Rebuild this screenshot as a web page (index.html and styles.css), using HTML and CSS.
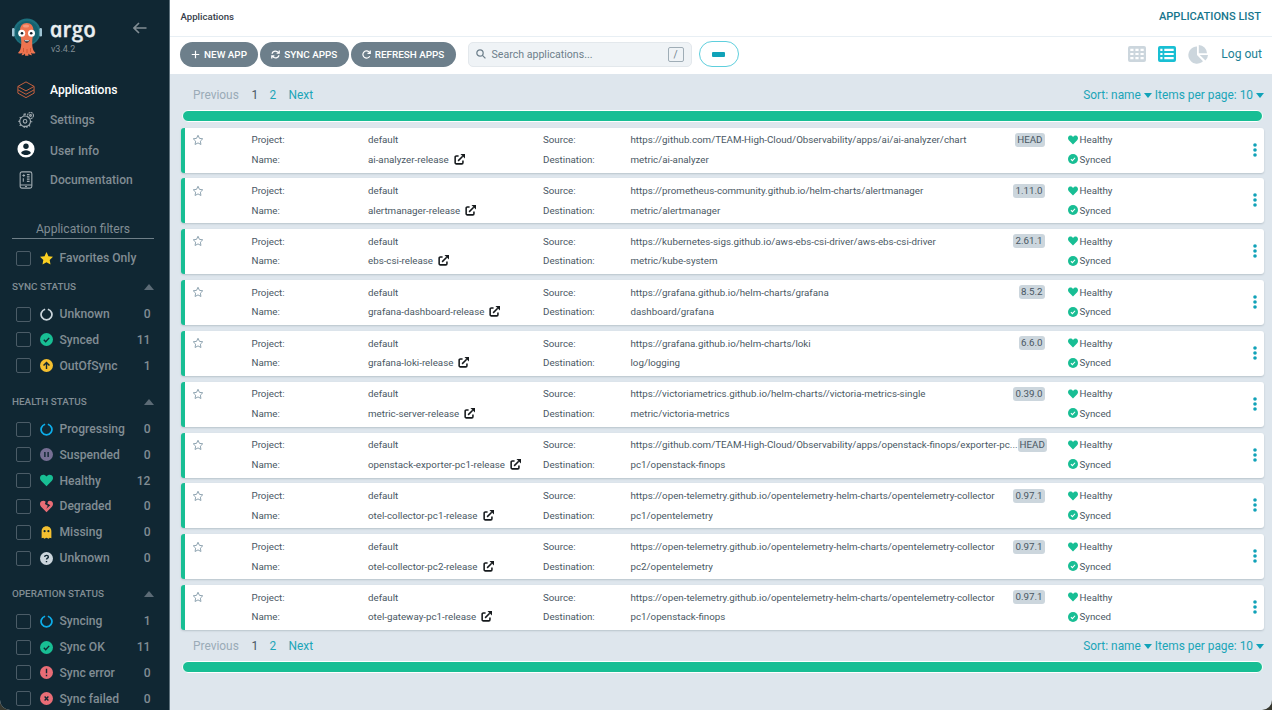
FILE: index.html
```html
<!DOCTYPE html>
<html lang="en">
<head>
    <meta charset="UTF-8">
    <meta name="viewport" content="width=device-width, initial-scale=1.0">
    <title>Applications List - Argo CD</title>
    <link rel="stylesheet" href="styles.css">
</head>
<body>
    <!-- Shared icons -->
    <svg class="sprite" width="0" height="0">
        <symbol id="i-star" viewBox="1 1 22 22"><path d="M12 1l3.300 7 7.700 1-5.600 5.400 1.400 7.600L12 18.300 5.200 22l1.400-7.600L1 9l7.700-1z"/></symbol>
        <symbol id="i-ring" viewBox="0 0 24 24"><path d="M14.500 2.300a10 10 0 1 1-5 0" fill="none" stroke="currentColor" stroke-width="3.200"/></symbol>
        <symbol id="i-check" viewBox="0 0 24 24"><circle cx="12" cy="12" r="12"/><path class="cut" d="M7 12.500l3.500 3.500 6.500-7"/></symbol>
        <symbol id="i-up" viewBox="0 0 24 24"><circle cx="12" cy="12" r="12"/><path class="cut" d="M12 18.500V7M6.500 12L12 6.500 17.500 12"/></symbol>
        <symbol id="i-pause" viewBox="0 0 24 24"><circle cx="12" cy="12" r="12"/><path class="cut" d="M9 7.500v9M15 7.500v9"/></symbol>
        <symbol id="i-heart" viewBox="0 0 24 24"><path d="M12 22.500L2 12.500C-1 9-.5 4.500 2.500 2.500S9.500 1.500 12 4.500c2.500-3 6.500-4 9.500-2s3.500 6.500.5 10z"/></symbol>
        <symbol id="i-broken" viewBox="0 0 24 24"><path d="M12 22.500L2 12.500C-1 9-.5 4.500 2.500 2.500S8 1 10.500 3L9 7.500l5.500 3-3 5.500 7.500-6.500-5.500-3 1.500-4c2-1.500 4.500-1.500 6.500 0 3 2 3.500 6.500.5 10z"/></symbol>
        <symbol id="i-ghost" viewBox="0 0 24 24"><path fill-rule="evenodd" d="M12 .5C6.500.5 3 4.500 3 10v12.500l3-1 2 2 4-2 4 2 2-2 3 1V10C21 4.500 17.500.5 12 .5zM8.500 7.500a2 2 0 1 1 0 4 2 2 0 0 1 0-4zm7 0a2 2 0 1 1 0 4 2 2 0 0 1 0-4z"/></symbol>
        <symbol id="i-question" viewBox="0 0 24 24"><circle cx="12" cy="12" r="12"/><path class="cut" d="M8.500 9c.5-4 7-3.500 7 0 0 2.500-3.500 2.300-3.500 5M12 16.500v2.500"/></symbol>
        <symbol id="i-exclaim" viewBox="0 0 24 24"><circle cx="12" cy="12" r="12"/><path class="cut" d="M12 5v8.500M12 16v3"/></symbol>
        <symbol id="i-cross" viewBox="0 0 24 24"><circle cx="12" cy="12" r="12"/><path class="cut" d="M8.500 8.500l7 7M15.500 8.500l-7 7"/></symbol>
        <symbol id="i-star-o" viewBox="0 0 24 24"><path d="M12 2.500l2.900 6.200 6.600.9-4.800 4.700 1.200 6.700L12 17.800 6.100 21l1.200-6.700-4.800-4.700 6.600-.9z" fill="none" stroke="currentColor" stroke-width="2" stroke-linejoin="round"/></symbol>
        <symbol id="i-external" viewBox="0 0 24 24"><path d="M10 4.500H5A2.500 2.500 0 0 0 2.500 7v12A2.500 2.500 0 0 0 5 21.500h12a2.500 2.500 0 0 0 2.500-2.500v-5M9 15L19 5" fill="none" stroke="currentColor" stroke-width="3.400"/><path d="M14 0h10v10z"/></symbol>
    </svg>

    <div class="app">
        <aside class="sidebar">
            <div class="brand">
                <svg class="mascot" viewBox="0 0 30 38">
                    <circle cx="15" cy="14" r="13.500" fill="#1d6f7d"/>
                    <circle cx="15" cy="14.500" r="11.500" fill="#15616f"/>
                    <rect x="0" y="10" width="2.500" height="8.500" rx="1.200" fill="#9fc3d3"/>
                    <rect x="27.500" y="10" width="2.500" height="8.500" rx="1.200" fill="#9fc3d3"/>
                    <path d="M14.800 5C10.500 5 8 8 8 12.500c0 4.500 1.300 7 1.300 11.500 0 4.500-.3 8-3.300 11 1.500.9 3.200.8 4.400-.3-.1 1-.4 1.700-.9 2.500 1.700.2 2.800-.5 3.400-1.700.2.900.3 1.600.2 2.300h3.300c-.1-.7 0-1.400.2-2.300.6 1.200 1.700 1.900 3.400 1.700-.5-.8-.8-1.500-.9-2.500 1.200 1.100 2.900 1.200 4.400.3-3-3-3.300-6.500-3.300-11s1.300-7 1.300-11.500C21.500 8 19 5 14.800 5z" fill="#ee7450"/>
                    <path d="M11.500 30v4M15 31v4M18.500 30v4" stroke="#c9512f" stroke-width=".8"/>
                    <ellipse cx="14" cy="8" rx="3" ry="1.500" fill="#f69a7c"/>
                    <circle cx="9.700" cy="15.300" r="3.500" fill="#fff"/>
                    <circle cx="19.500" cy="15.300" r="3.500" fill="#fff"/>
                    <circle cx="10" cy="15.300" r="1.300" fill="#15202a"/>
                    <circle cx="19.200" cy="15.300" r="1.300" fill="#15202a"/>
                    <path d="M12 22h5.500c-.5 3.500-5 3.500-5.500 0z" fill="#15202a"/>
                    <path d="M12.600 22.300h4.300v1h-4.300z" fill="#fff"/>
                </svg>
                <div class="brand-text">
                    <span class="wordmark">argo</span>
                    <span class="version">v3.4.2</span>
                </div>
                <svg class="collapse" viewBox="0 0 14 12"><path d="M13.500 6H1M6 1L1 6l5 5"/></svg>
            </div>

            <nav class="nav">
                <a class="nav-item active">
                    <svg viewBox="0 0 20 20"><path d="M10 1l9 5-9 5-9-5zM1 9.800l9 5 9-5M1 6v7.500l9 5 9-5V6"/></svg>
                    Applications
                </a>
                <a class="nav-item">
                    <svg viewBox="0 0 20 20"><path d="M7.500 5.500l.5-2h2M3 7l1.500 1M1.500 11.500h2M3 16.500l1.500-1.500M8 19v-2h3v2M14.500 17L13 15.500M17 12h-2"/><circle cx="9" cy="11.500" r="6"/><circle cx="9" cy="11.500" r="2"/><circle cx="15" cy="5" r="3.300" stroke-dasharray="2 .6"/><circle cx="15" cy="5" r="1"/></svg>
                    Settings
                </a>
                <a class="nav-item nav-user">
                    <svg viewBox="0 0 20 20"><circle cx="10" cy="10" r="9.500" fill="#fff" stroke="none"/><circle cx="10" cy="7" r="3" fill="#102733" stroke="none"/><path d="M4.500 14.500c1.500-4 9.500-4 11 0-3 3-8 3-11 0z" fill="#102733" stroke="none"/></svg>
                    User Info
                </a>
                <a class="nav-item nav-docs">
                    <svg viewBox="0 0 20 20"><rect x="3.500" y="1" width="13" height="18" rx="2"/><path d="M3.500 15.500h13M6 5h3M7.500 3.500v3M7 8v4M11 4h3M11 6.500h3M11 9h3M11 11.500h3M9 17.300h2"/></svg>
                    Documentation
                </a>
            </nav>

            <div class="filters-title">Application filters</div>
            <label class="filter favorites">
                <span class="checkbox"></span>
                <svg class="icon yellow-star"><use href="#i-star"/></svg>
                <span class="label">Favorites Only</span>
            </label>
            <div id="filters"></div>
        </aside>

        <main class="main">
            <header class="topbar">
                <span class="crumb">Applications</span>
                <span class="page-title">APPLICATIONS LIST</span>
            </header>
            <div class="toolbar">
                <button class="btn btn-new"><svg viewBox="0 0 12 12"><path d="M6 1v10M1 6h10"/></svg>NEW APP</button>
                <button class="btn btn-sync"><svg viewBox="0 0 12 12"><path d="M1.300 5C2 2 5.500.4 8.600 2.200L10.500 4M11 .8v3.500H7.500M10.700 7C10 10 6.500 11.600 3.400 9.800L1.500 8M1 11.200V7.700h3.500"/></svg>SYNC APPS</button>
                <button class="btn btn-refresh"><svg viewBox="0 0 12 12"><path d="M10.300 8.200A4.800 4.800 0 1 1 9.300 2.500L10.800 4M11 .8v3.700H7.300"/></svg>REFRESH APPS</button>
                <div class="search">
                    <svg viewBox="0 0 12 12"><circle cx="4.800" cy="4.800" r="3.800"/><path d="M7.700 7.700l3.600 3.600"/></svg>
                    <span class="search-text">Search applications...</span>
                    <kbd>/</kbd>
                </div>
                <button class="pill"><span></span></button>
                <div class="views">
                    <svg viewBox="0 0 18 16"><path fill-rule="evenodd" d="M2 0h14a2 2 0 0 1 2 2v12a2 2 0 0 1-2 2H2a2 2 0 0 1-2-2V2a2 2 0 0 1 2-2zM2.300 2.800V5h3.200V2.800zm5.100 0V5h3.200V2.800zm5.100 0V5h3.200V2.800zM2.300 6.900v2.200h3.200V6.900zm5.100 0v2.200h3.200V6.900zm5.100 0v2.200h3.200V6.900zM2.300 11v2.200h3.200V11zm5.100 0v2.200h3.200V11zm5.100 0v2.200h3.200V11z"/></svg>
                    <svg class="on" viewBox="0 0 18 16"><path fill-rule="evenodd" d="M2 0h14a2 2 0 0 1 2 2v12a2 2 0 0 1-2 2H2a2 2 0 0 1-2-2V2a2 2 0 0 1 2-2zM2.300 2.800V5h2.200V2.800zm4 0V5h9.400V2.800zM2.300 6.900v2.200h2.200V6.900zm4 0v2.200h9.400V6.900zM2.300 11v2.200h2.200V11zm4 0v2.200h9.400V11z"/></svg>
                    <svg class="pie" viewBox="0 0 20 19"><path d="M9 1.500V10l6 6.200A8.600 8.600 0 1 1 9 1.500zM10.800 0a8.600 8.600 0 0 1 8.200 8.300h-8.200zM11.800 10H20a8.600 8.600 0 0 1-2.600 5.600z"/></svg>
                </div>
                <a class="logout">Log out</a>
            </div>

            <div class="content">
                <div class="pagination">
                    <span class="prev">Previous</span><span class="current">1</span><span class="two">2</span><span class="next">Next</span>
                    <span class="sort">Sort: name <i class="caret"></i></span>
                    <span class="per-page">Items per page: 10 <i class="caret"></i></span>
                </div>
                <div class="status-bar"></div>
                <div class="rows" id="rows"></div>
                <div class="pagination">
                    <span class="prev">Previous</span><span class="current">1</span><span class="two">2</span><span class="next">Next</span>
                    <span class="sort">Sort: name <i class="caret"></i></span>
                    <span class="per-page">Items per page: 10 <i class="caret"></i></span>
                </div>
                <div class="status-bar"></div>
            </div>
        </main>
    </div>
    <script src="app.js"></script>
</body>
</html>
```

FILE: styles.css
```css
* {
    box-sizing: border-box;
}
body {
    margin: 0;
    height: 710px;
    overflow: hidden;
    background: #37382f;
    font-family: Roboto, "Liberation Sans", sans-serif;
    color: #495763;
}
svg {
    display: block;
    flex: none;
    fill: currentColor;
}
.sprite {
    position: absolute;
}
.cut {
    fill: none;
    stroke: var(--cut, #102733);
    stroke-width: 2.6;
}
.app {
    display: flex;
    height: 710px;
    border-radius: 0 0 10px 10px;
    overflow: hidden;
    background: #dee6ed;
}

/* Sidebar */
.sidebar {
    width: 170px;
    flex: none;
    padding: 0 15px 0 12px;
    background: #102733;
    border-right: 1px solid #5d717c;
    color: #818d94;
    font-weight: 500;
    overflow: hidden;
}
.brand {
    display: flex;
    height: 74.5px;
    padding-top: 18px;
}
.mascot {
    width: 30px;
    height: 38px;
}
.brand-text {
    display: flex;
    flex-direction: column;
    margin-left: 9px;
    width: 82px;
}
.wordmark {
    height: 25px;
    line-height: 20px;
    font-family: "Open Sans", "Noto Sans", sans-serif;
    font-style: italic;
    font-weight: 600;
    font-size: 22px;
    color: #e9eef0;
    -webkit-text-stroke: 0.3px #e9eef0;
    transform: skewX(12deg);
    transform-origin: 0 75%;
}
.version {
    font-size: 9px;
    line-height: 12px;
    font-weight: 400;
}
.collapse {
    width: 14px;
    height: 12px;
    margin-top: 4px;
    fill: none;
    stroke: #818d94;
    stroke-width: 1.6;
}
.nav-item {
    display: flex;
    align-items: center;
    gap: 14px;
    height: 30px;
    padding-left: 4px;
    font-size: 12.1px;
}
.nav-item svg {
    width: 20px;
    height: 18px;
    fill: none;
    stroke: #a3adb3;
    stroke-width: 1.2;
}
.nav-item.active {
    color: #fff;
}
.nav-item.active svg {
    stroke: #c4603f;
    stroke-width: 1.1;
}
.nav-user {
    height: 33px;
}
.nav-user svg {
    margin-top: -4px;
}
.nav-docs {
    height: 24px;
}
.filters-title {
    margin-top: 27px;
    height: 20px;
    line-height: 20px;
    border-bottom: 1px solid #6f7f88;
    text-align: center;
    font-size: 12.1px;
    font-weight: 400;
}
.favorites {
    margin-top: 7px;
}
.filter {
    display: flex;
    align-items: center;
    height: 25.8px;
    padding: 0 3.5px 0 4px;
    font-size: 12.1px;
}
.checkbox {
    width: 15px;
    height: 15px;
    border: 1px solid #4b5c67;
    border-radius: 2px;
}
.filter .icon {
    width: 13px;
    height: 13px;
    margin: 0 6.5px 0 9px;
}
.filter .label {
    flex: 1;
}
.yellow-star {
    color: #fbd022;
}
.filter-group + .filter-group {
    margin-top: 7.5px;
}
.group-title {
    display: flex;
    justify-content: space-between;
    align-items: center;
    height: 30px;
    padding-top: 1px;
    font-size: 9.9px;
}
.group-title::after {
    content: "";
    border: 5px solid transparent;
    border-top: 0;
    border-bottom: 6px solid #5c6b76;
}
.white { color: #ccd6dd; }
.green { color: #18be94; }
.yellow { color: #f4c030; }
.blue { color: #0dadea; }
.purple { color: #766f94; }
.red { color: #e96d76; }

/* Header */
.main {
    flex: 1;
    min-width: 0;
}
.topbar {
    display: flex;
    justify-content: space-between;
    align-items: center;
    height: 37px;
    padding: 0 11px 3px 10.5px;
    background: #fff;
    border-bottom: 1px solid #e8eff4;
    font-weight: 500;
}
.crumb {
    font-size: 9.6px;
    color: #363c4a;
}
.page-title {
    font-size: 11.1px;
    color: #16758c;
}
.toolbar {
    display: flex;
    align-items: center;
    height: 36.5px;
    padding: 0 10px 2px 10px;
    background: #fff;
}
.btn {
    display: flex;
    align-items: center;
    justify-content: center;
    gap: 4px;
    height: 25.5px;
    margin: 0 2px 0 0;
    padding: 0;
    border: none;
    border-radius: 13px;
    background: #6d7f8b;
    color: #fff;
    font: 500 9.9px Roboto, sans-serif;
}
.btn svg {
    width: 9px;
    height: 9px;
    fill: none;
    stroke: #fff;
    stroke-width: 1.6;
}
.btn-new { width: 78px; }
.btn-sync { width: 88.5px; }
.btn-refresh { width: 105px; }
.search {
    display: flex;
    align-items: center;
    width: 224px;
    height: 25px;
    margin-left: 10px;
    padding: 0 7px;
    border: 1px solid #e3e8ec;
    border-radius: 5px;
    background: #eff3f6;
    color: #6d7f8b;
    font-size: 10.6px;
}
.search svg {
    width: 10px;
    height: 10px;
    fill: none;
    stroke: #6d7f8b;
    stroke-width: 1.5;
}
.search-text {
    flex: 1;
    margin-left: 6px;
}
.search kbd {
    width: 16px;
    height: 15px;
    border: 1px solid #9fadb6;
    border-radius: 2px;
    font: 10px/13px Roboto, sans-serif;
    text-align: center;
}
.pill {
    display: flex;
    align-items: center;
    justify-content: center;
    width: 40px;
    height: 26px;
    margin-left: 7px;
    padding: 0;
    border: 1px solid #5fcfdd;
    border-radius: 13px;
    background: #fff;
}
.pill span {
    width: 13px;
    height: 5px;
    border-radius: 1px;
    background: #10a2b8;
}
.views {
    display: flex;
    align-items: center;
    gap: 12px;
    margin-left: auto;
    color: #ccd6dd;
}
.views svg {
    width: 18px;
    height: 16px;
}
.views .on {
    color: #19bfd3;
}
.views .pie {
    width: 20px;
    height: 19px;
}
.logout {
    margin-left: 13px;
    font-size: 12.1px;
    color: #1c7f95;
}

/* Application list */
.content {
    padding: 7.5px 8px 0 11px;
}
.pagination {
    display: flex;
    align-items: center;
    height: 29px;
    padding: 0 0 1px 12px;
    font-size: 11.9px;
    color: #1ba5b8;
}
.prev {
    width: 58.5px;
    color: #9aabb7;
}
.current {
    width: 18px;
    color: #495763;
}
.two {
    width: 19px;
}
.sort {
    margin-left: auto;
    margin-right: 3px;
}
.caret {
    display: inline-block;
    border: 4px solid transparent;
    border-top: 5px solid #10a2b8;
    border-bottom: 0;
    vertical-align: 1px;
}
.status-bar {
    height: 12px;
    margin: 0 1px;
    border: 1.5px solid #fff;
    border-radius: 6px;
    background: #18be94;
}
.rows {
    padding-top: 5.5px;
    margin-bottom: -3.5px;
}
.row {
    display: grid;
    grid-template-columns: 66.5px 116.5px 175px 87.5px 386px 51px 1fr 20px;
    grid-template-rows: 19.5px 19.5px;
    align-items: center;
    height: 45px;
    margin-bottom: 5.85px;
    padding: 2.5px 0 3px 0;
    border-left: 4px solid #18be94;
    border-radius: 3px;
    background: #fff;
    box-shadow: 0 1px 2px #b9c4cc;
    font-size: 9.75px;
    white-space: nowrap;
}
.row .fav {
    width: 12px;
    height: 12px;
    margin-left: 7px;
    color: #8fa4b1;
}
.row .name,
.row .status {
    display: flex;
    align-items: center;
}
.row .name svg {
    width: 11px;
    height: 11px;
    margin-left: 5px;
    color: #161a1d;
}
.source-line {
    display: flex;
    align-items: center;
    justify-content: space-between;
    width: 414px;
}
.revision {
    flex: none;
    padding: 0 2px;
    border-radius: 3px;
    background: #ccd6dd;
    line-height: 14px;
}
.row .status {
    --cut: #fff;
    grid-column: 7;
    gap: 2px;
}
.row .status svg {
    width: 10px;
    height: 10px;
    color: #18be94;
}
.row .menu {
    grid-column: 8;
    grid-row: 1 / 3;
    width: 4px;
    height: 14px;
    margin: 0 0 0 8.5px;
    color: #10a2b8;
}
.c1 { grid-column: 1; }
.c2 { grid-column: 2; }
.c3 { grid-column: 3; }
.c4 { grid-column: 4; }
.c5 { grid-column: 5; }
```

FILE: app.js
```javascript
const filterGroups = [
    ['SYNC STATUS', [
        ['ring', 'white', 'Unknown', 0],
        ['check', 'green', 'Synced', 11],
        ['up', 'yellow', 'OutOfSync', 1]
    ]],
    ['HEALTH STATUS', [
        ['ring', 'blue', 'Progressing', 0],
        ['pause', 'purple', 'Suspended', 0],
        ['heart', 'green', 'Healthy', 12],
        ['broken', 'red', 'Degraded', 0],
        ['ghost', 'yellow', 'Missing', 0],
        ['question', 'white', 'Unknown', 0]
    ]],
    ['OPERATION STATUS', [
        ['ring', 'blue', 'Syncing', 1],
        ['check', 'green', 'Sync OK', 11],
        ['exclaim', 'red', 'Sync error', 0],
        ['cross', 'red', 'Sync failed', 0]
    ]]
];

// name, source, destination, revision
const apps = [
    ['ai-analyzer-release', 'https://github.com/TEAM-High-Cloud/Observability/apps/ai/ai-analyzer/chart', 'metric/ai-analyzer', 'HEAD'],
    ['alertmanager-release', 'https://prometheus-community.github.io/helm-charts/alertmanager', 'metric/alertmanager', '1.11.0'],
    ['ebs-csi-release', 'https://kubernetes-sigs.github.io/aws-ebs-csi-driver/aws-ebs-csi-driver', 'metric/kube-system', '2.61.1'],
    ['grafana-dashboard-release', 'https://grafana.github.io/helm-charts/grafana', 'dashboard/grafana', '8.5.2'],
    ['grafana-loki-release', 'https://grafana.github.io/helm-charts/loki', 'log/logging', '6.6.0'],
    ['metric-server-release', 'https://victoriametrics.github.io/helm-charts//victoria-metrics-single', 'metric/victoria-metrics', '0.39.0'],
    ['openstack-exporter-pc1-release', 'https://github.com/TEAM-High-Cloud/Observability/apps/openstack-finops/exporter-pc...', 'pc1/openstack-finops', 'HEAD'],
    ['otel-collector-pc1-release', 'https://open-telemetry.github.io/opentelemetry-helm-charts/opentelemetry-collector', 'pc1/opentelemetry', '0.97.1'],
    ['otel-collector-pc2-release', 'https://open-telemetry.github.io/opentelemetry-helm-charts/opentelemetry-collector', 'pc2/opentelemetry', '0.97.1'],
    ['otel-gateway-pc1-release', 'https://open-telemetry.github.io/opentelemetry-helm-charts/opentelemetry-collector', 'pc1/openstack-finops', '0.97.1']
];

document.getElementById('filters').innerHTML = filterGroups.map(([title, items]) => `
    <div class="filter-group">
        <div class="group-title">${title}</div>
        ${items.map(([icon, color, label, count]) => `
        <label class="filter">
            <span class="checkbox"></span>
            <svg class="icon ${color}"><use href="#i-${icon}"/></svg>
            <span class="label">${label}</span>
            <span>${count}</span>
        </label>`).join('')}
    </div>`).join('');

document.getElementById('rows').innerHTML = apps.map(([name, source, destination, revision]) => `
    <div class="row">
        <svg class="fav c1"><use href="#i-star-o"/></svg>
        <span class="c2">Project:</span>
        <span class="c3">default</span>
        <span class="c4">Source:</span>
        <div class="source-line c5"><span class="source">${source}</span><span class="revision">${revision}</span></div>
        <span class="status"><svg><use href="#i-heart"/></svg>Healthy</span>
        <svg class="menu" viewBox="0 0 4 14"><circle cx="2" cy="2" r="1.800"/><circle cx="2" cy="7" r="1.800"/><circle cx="2" cy="12" r="1.800"/></svg>
        <span class="c2">Name:</span>
        <span class="name c3">${name}<svg><use href="#i-external"/></svg></span>
        <span class="c4">Destination:</span>
        <span class="c5">${destination}</span>
        <span class="status"><svg><use href="#i-check"/></svg>Synced</span>
    </div>`).join('');
```
